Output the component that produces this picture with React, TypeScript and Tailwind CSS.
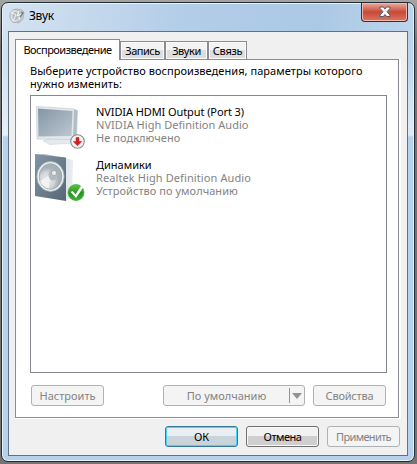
import { type ReactNode } from 'react'
import { clsx } from 'clsx'

type Device = {
  id: string
  name: string
  driver: string
  status: string
  icon: ReactNode
  nameClass: string
  driverClass: string
  statusClass: string
}

function SpeakerIcon() {
  return (
    <svg width="16" height="16" viewBox="0 0 16 16" className="shrink-0">
      <path d="M6 1 12 1.5 15 4 14 11 10 15 5 14Z" fill="#c3c8ca" stroke="#a5acb0" strokeWidth=".7" />
      <ellipse cx="6" cy="8" rx="5.2" ry="6.6" fill="#d9dddf" stroke="#a3a9ad" strokeWidth=".8" />
      <ellipse cx="6.5" cy="8" rx="3" ry="4" fill="#b4babd" />
      <path d="M2 4 7 7 4 13M10 3 8 8 12 6 10 12" fill="none" stroke="#f7f7f7" />
      <path d="M12 4 14 5 11 9" fill="none" stroke="#737c83" strokeWidth="1.3" />
    </svg>
  )
}

function MonitorIcon() {
  return (
    <svg width="52" height="50" viewBox="0 0 52 50">
      <defs>
        <linearGradient id="screen" x1="0" y1="0" x2="1" y2="1">
          <stop offset="0" stopColor="#8595a5" />
          <stop offset=".55" stopColor="#a3b1bd" />
          <stop offset="1" stopColor="#bdc8d1" />
        </linearGradient>
      </defs>
      <path d="M8 41 18 38 38 39 37 43 15 44.5Z" fill="#e5eaed" stroke="#ccd3d8" strokeWidth=".6" />
      <path d="M1.5 6.5 39 9 42.5 10.5 41.5 38 38 39.5 2 39Z" fill="#e2e8ec" stroke="#c2ccd3" strokeWidth=".7" />
      <path d="M3 8.5 37.5 11 36.5 36 3.5 36.5Z" fill="url(#screen)" />
      <path d="M39 9.3 42.3 10.7 41.3 38 38 39Z" fill="#b0bcc6" />
      <circle cx="42.5" cy="41.5" r="6.8" fill="#f2f2f2" stroke="#8d8d8d" strokeWidth="1.1" />
      <path d="M41 37.5h3v4h2.8l-4.3 4.3L38.2 41.5H41Z" fill="#cf2027" stroke="#b9262b" strokeWidth=".5" />
    </svg>
  )
}

function LoudspeakerIcon() {
  return (
    <svg width="52" height="50" viewBox="0 0 52 50">
      <defs>
        <linearGradient id="cabinet" x1="0" y1="0" x2="1" y2="1">
          <stop offset="0" stopColor="#8294a4" />
          <stop offset="1" stopColor="#566674" />
        </linearGradient>
        <linearGradient id="side">
          <stop offset="0" stopColor="#b4bec5" />
          <stop offset="1" stopColor="#eaeef0" />
        </linearGradient>
        <radialGradient id="cone" cx=".35" cy=".65">
          <stop offset="0" stopColor="#eceeef" />
          <stop offset=".65" stopColor="#d0d5d8" />
          <stop offset="1" stopColor="#a6b0b6" />
        </radialGradient>
        <linearGradient id="ready" x1="0" y1="0" x2="0" y2="1">
          <stop offset="0" stopColor="#5bc744" />
          <stop offset=".55" stopColor="#22961e" />
          <stop offset="1" stopColor="#40b633" />
        </linearGradient>
      </defs>
      <path d="M0 1 11 1 38 7 37 43 31 48 31 5Z" fill="url(#side)" />
      <path d="M0 1 31 4.5 31 48 0 43Z" fill="url(#cabinet)" />
      <ellipse cx="15.5" cy="23.5" rx="13.6" ry="15" fill="#eef1f2" stroke="#a3afb7" strokeWidth=".8" />
      <ellipse cx="15.5" cy="23.5" rx="11.3" ry="12.8" fill="url(#cone)" stroke="#97a3aa" strokeWidth=".8" />
      <path d="M15 22 5 28Q8 35 14 35.5Z" fill="#f0f2f3" />
      <ellipse cx="18" cy="22" rx="4.5" ry="5.5" fill="#b3bbc0" />
      <circle cx="19" cy="20" r="2.6" fill="#e9ecee" stroke="#8e999f" strokeWidth=".7" />
      <circle cx="41" cy="39.5" r="8" fill="url(#ready)" stroke="#4ba43d" strokeWidth=".7" />
      <path d="m35.5 39 2.2-1 2.8 3.2L46 33l2.2 1.5L41 45Z" fill="white" />
    </svg>
  )
}

const devices: Device[] = [
  {
    id: 'hdmi',
    name: 'NVIDIA HDMI Output (Port 3)',
    driver: 'NVIDIA High Definition Audio',
    status: 'Не подключено',
    icon: <MonitorIcon />,
    nameClass: 'tracking-[-0.09px]',
    driverClass: 'tracking-[0.04px]',
    statusClass: 'tracking-[0.05px]',
  },
  {
    id: 'speakers',
    name: 'Динамики',
    driver: 'Realtek High Definition Audio',
    status: 'Устройство по умолчанию',
    icon: <LoudspeakerIcon />,
    nameClass: 'tracking-[0px]',
    driverClass: 'tracking-[0.1px]',
    statusClass: 'tracking-[0.04px]',
  },
]

function Button({
  children,
  className,
  disabled = false,
  primary = false,
}: {
  children: ReactNode
  className?: string
  disabled?: boolean
  primary?: boolean
}) {
  return (
    <button
      type="button"
      disabled={disabled}
      className={clsx(
        'flex h-[21px] w-[73px] shrink-0 items-center justify-center rounded-[3px] border whitespace-nowrap',
        disabled && 'border-[#adb2b5] bg-[#f4f4f4] text-[#838383]',
        !disabled && !primary && 'border-[#707070] bg-linear-to-b from-[#f2f2f2] from-50% to-[#cfcfcf] to-50% shadow-[inset_0_0_0_1px_#f8f8f8]',
        primary && 'border-[#35799d] bg-linear-to-b from-[#e8eef1] from-50% to-[#c9d4da] to-50% shadow-[inset_0_0_0_1px_#48d2f5]',
        className,
      )}
    >
      {children}
    </button>
  )
}

function Tab({ label, className }: { label: string; className?: string }) {
  return (
    <button
      type="button"
      className={clsx(
        'h-[18px] border border-b-0 border-[#898c95] bg-linear-to-b from-[#f3f3f3] from-50% to-[#dedede] to-50% leading-[17px] whitespace-nowrap shadow-[inset_0_0_0_1px_#fafafa]',
        className,
      )}
    >
      {label}
    </button>
  )
}

function TitleBar() {
  return (
    <header className="flex h-7 items-start justify-between pl-[3px]">
      <div className="flex items-center gap-1 pt-[5px]">
        <SpeakerIcon />
        <span className="text-[12px] leading-4 tracking-[-0.3px]">Звук</span>
      </div>
      <button
        type="button"
        aria-label="Закрыть"
        className="flex h-[19px] w-[47px] items-center justify-center rounded-b-[4px] border border-t-0 border-[#4b2630] bg-linear-to-b from-[#e5ac9f] via-[#c94835] via-50% to-[#d87561] shadow-[inset_0_0_0_1px_#efb9ad]"
      >
        <svg width="14" height="12" viewBox="0 0 14 12">
          <path
            d="M2 1H5.5L7 3 8.5 1H12V2.5L9 5.7 12 9V10.5H8.5L7 8.5 5.5 10.5H2V9L5 5.7 2 2.5Z"
            fill="#fafafa"
            stroke="#525a69"
          />
        </svg>
      </button>
    </header>
  )
}

export default function App() {
  return (
    <div className="h-[464px] w-[417px] overflow-hidden bg-linear-to-b from-[#a4a5a2] via-[#747474] via-10% to-[#747474] pt-0.5 pl-px font-['Noto_Sans','Liberation_Sans',sans-serif] text-[11px] leading-[13px] text-black">
      <div className="h-[460px] w-[414px] rounded-[7px] border border-[#242c34] bg-[linear-gradient(to_bottom,transparent_0,transparent_60px,#ffffff80_132px,#b6d1eb_134px),linear-gradient(100deg,#d5e3f1_0%,#b2cde8_38%,#abc8e5_65%,#cbdff1_100%)] px-1.5 shadow-[inset_0_0_0_1px_#e6f1fb]">
        <div className="-ml-0.5">
          <TitleBar />
        </div>
        <main className="flex h-[425px] flex-col border border-[#5f7283] bg-[#f0f0f0] px-[6px] pt-[7px]">
          <nav className="flex h-5 items-end">
            <button
              type="button"
              className="z-10 -mb-px h-[21px] w-[105px] shrink-0 self-start border border-b-0 border-[#898c95] bg-white pb-px leading-[17px] tracking-[-0.5px] whitespace-nowrap"
            >
              Воспроизведение
            </button>
            <Tab label="Запись" className="w-[45px] tracking-[-0.5px]" />
            <Tab label="Звуки" className="w-[43px] tracking-[-0.4px]" />
            <Tab label="Связь" className="w-[39px] tracking-[-0.3px]" />
          </nav>
          <section className="h-[360px] w-[386px] shrink-0 border-r-2 border-b border-white">
            <div className="h-[359px] w-[384px] border border-[#898c95] bg-white px-[14px] pt-1">
              <p className="leading-[13px] tracking-[0.055px] whitespace-nowrap">
                Выберите устройство воспроизведения, параметры которого
                <br />
                нужно изменить:
              </p>
              <ul className="mt-[5px] h-[278px] w-[357px] border border-[#828790] pt-1 pl-1">
                {devices.map((device) => (
                  <li key={device.id} className="flex h-[53px] whitespace-nowrap">
                    <div className="w-[61px] shrink-0">{device.icon}</div>
                    <div className="pt-[5px]">
                      <div className={device.nameClass}>{device.name}</div>
                      <div className={clsx('text-[#838383]', device.driverClass)}>{device.driver}</div>
                      <div className={clsx('text-[#838383]', device.statusClass)}>{device.status}</div>
                    </div>
                  </li>
                ))}
              </ul>
              <div className="mt-3 flex pl-px">
                <Button disabled>Настроить</Button>
                <Button disabled className="ml-[59px] w-[142px] pr-0.5">
                  <span className="flex-1">По умолчанию</span>
                  <span className="h-[15px] border-l border-[#929292]" />
                  <svg width="10" height="6" viewBox="0 0 10 6" className="ml-0.5">
                    <path d="M0 0H10L5 6Z" fill="#929292" />
                  </svg>
                </Button>
                <Button disabled className="ml-2 tracking-[-0.2px]">Свойства</Button>
              </div>
            </div>
          </section>
          <footer className="mt-[7px] flex gap-2 pl-[150px]">
            <Button primary>ОК</Button>
            <Button className="tracking-[-0.5px]">Отмена</Button>
            <Button disabled className="tracking-[-0.65px]">Применить</Button>
          </footer>
        </main>
      </div>
    </div>
  )
}
